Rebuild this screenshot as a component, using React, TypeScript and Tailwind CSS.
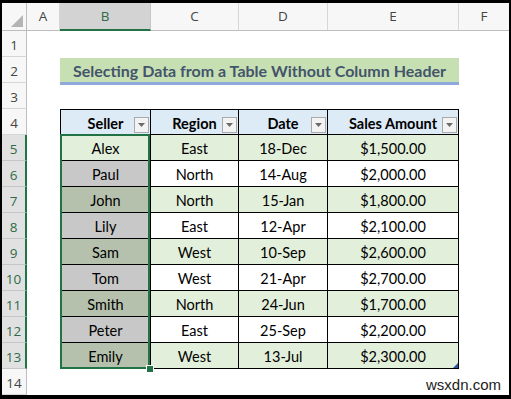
import React from "react";

// Excel-like sheet: table B4:E13 with the Seller data column selected.

type Row = { seller: string; region: string; date: string; amount: string };

const DATA: Row[] = [
  { seller: "Alex", region: "East", date: "18-Dec", amount: "$1,500.00" },
  { seller: "Paul", region: "North", date: "14-Aug", amount: "$2,000.00" },
  { seller: "John", region: "North", date: "15-Jan", amount: "$1,800.00" },
  { seller: "Lily", region: "East", date: "12-Apr", amount: "$2,100.00" },
  { seller: "Sam", region: "West", date: "10-Sep", amount: "$2,600.00" },
  { seller: "Tom", region: "West", date: "21-Apr", amount: "$2,700.00" },
  { seller: "Smith", region: "North", date: "24-Jun", amount: "$1,700.00" },
  { seller: "Peter", region: "East", date: "25-Sep", amount: "$2,200.00" },
  { seller: "Emily", region: "West", date: "13-Jul", amount: "$2,300.00" },
];

const cellFont = { fontFamily: "Lato, 'Open Sans', sans-serif" };
const headFont = { fontFamily: "'Open Sans', 'Noto Sans', sans-serif" };

function RowHead({ n, selected }: { n: number; selected?: boolean }) {
  return (
    <div
      style={headFont}
      className={
        "w-[25px] shrink-0 flex items-end justify-center pb-[1px] text-[13.5px] border-b " +
        (selected
          ? "bg-[#e1e1e1] text-[#2f6b48] border-b-[#c6c6c6] border-r-2 border-r-[#217346]"
          : "bg-[#f7f7f7] text-[#444] border-b-[#d6d6d6] border-r border-r-[#bdbdbd]")
      }
    >
      {n}
    </div>
  );
}

function Dropdown() {
  return (
    <div className="absolute right-[1px] bottom-[1px] w-[15px] h-[16px] bg-[#f3f3f3] border border-[#a9a9a9] flex items-center justify-center">
      <svg width="7" height="4" viewBox="0 0 7 4">
        <polygon points="0,0 7,0 3.5,4" fill="#6b6b6b" />
      </svg>
    </div>
  );
}

function HeadCell({ w, label, first }: { w: string; label: string; first?: boolean }) {
  return (
    <div
      style={cellFont}
      className={
        w +
        " relative shrink-0 flex items-center justify-center pt-[3px] bg-[#ddebf7] border-t border-b border-r border-black text-[14.5px] font-bold text-black " +
        (first ? "border-l" : "")
      }
    >
      {label}
      <Dropdown />
    </div>
  );
}

export default function App() {
  return (
    <div className="w-[511px] h-[399px] bg-black pt-[3px] pl-[2px] pr-[2px] pb-[4px]">
      <div className="relative w-[507px] h-[392px] bg-white overflow-hidden">
        {/* column headers */}
        <div style={headFont} className="flex h-[28px] text-[13.5px] text-[#444]">
          <div className="w-[25px] shrink-0 bg-[#f7f7f7] border-r border-b border-[#bdbdbd] flex items-end justify-end pr-[3px] pb-[3px]">
            <svg width="12" height="12" viewBox="0 0 12 12">
              <polygon points="12,0 12,12 0,12" fill="#b4b4b4" />
            </svg>
          </div>
          <div className="w-[33px] shrink-0 bg-[#f7f7f7] border-r border-r-[#d6d6d6] border-b border-b-[#bdbdbd] flex items-center justify-center">A</div>
          <div className="w-[91px] shrink-0 bg-[#d3d3d3] text-[#2f6b48] border-r border-r-[#c6c6c6] border-b-2 border-b-[#217346] flex items-center justify-center">B</div>
          <div className="w-[88px] shrink-0 bg-[#f7f7f7] border-r border-r-[#d6d6d6] border-b border-b-[#bdbdbd] flex items-center justify-center">C</div>
          <div className="w-[89px] shrink-0 bg-[#f7f7f7] border-r border-r-[#d6d6d6] border-b border-b-[#bdbdbd] flex items-center justify-center">D</div>
          <div className="w-[131px] shrink-0 bg-[#f7f7f7] border-r border-r-[#d6d6d6] border-b border-b-[#bdbdbd] flex items-center justify-center">E</div>
          <div className="flex-1 bg-[#f7f7f7] border-b border-b-[#bdbdbd] flex items-center justify-center">F</div>
        </div>

        {/* row 1 */}
        <div className="flex h-[26px]">
          <RowHead n={1} />
        </div>

        {/* row 2: title */}
        <div className="flex h-[26px]">
          <RowHead n={2} />
          <div className="w-[33px] shrink-0" />
          <div className="w-[399px] shrink-0 pt-[1px]">
            <div
              style={cellFont}
              className="h-[23px] bg-[#c6e0b4] border-b-[3px] border-[#8eaadb] box-content flex items-center justify-center pt-[1px] text-[16px] font-bold text-[#44546a]"
            >
              Selecting Data from a Table Without Column Header
            </div>
          </div>
        </div>

        {/* row 3 */}
        <div className="flex h-[26px]">
          <RowHead n={3} />
        </div>

        {/* row 4: table header */}
        <div className="flex h-[26px]">
          <RowHead n={4} />
          <div className="w-[33px] shrink-0" />
          <HeadCell w="w-[91px]" label="Seller" first />
          <HeadCell w="w-[88px]" label="Region" />
          <HeadCell w="w-[89px]" label="Date" />
          <HeadCell w="w-[131px]" label="Sales Amount" />
        </div>

        {/* data rows */}
        {DATA.map((r, i) => {
          const green = i % 2 === 0;
          const base = green ? "bg-[#e2efda]" : "bg-white";
          const sel = i === 0 ? "bg-[#e2efda]" : green ? "bg-[#b5c1ad]" : "bg-[#c8c8c8]";
          return (
            <div key={r.seller} style={cellFont} className="flex h-[26px] text-[14.5px] text-black">
              <RowHead n={i + 5} selected />
              <div className="w-[33px] shrink-0" />
              <div className={"w-[91px] shrink-0 flex items-center justify-center pt-[3px] border-l border-r border-b border-black " + sel}>{r.seller}</div>
              <div className={"w-[88px] shrink-0 flex items-center justify-center pt-[3px] border-r border-b border-black " + base}>{r.region}</div>
              <div className={"w-[89px] shrink-0 flex items-center justify-center pt-[3px] border-r border-b border-black " + base}>{r.date}</div>
              <div className={"relative w-[131px] shrink-0 flex items-center justify-center pt-[3px] border-r border-b border-black " + base}>
                {r.amount}
                {i === DATA.length - 1 && (
                  <svg className="absolute right-0 bottom-0" width="5" height="5" viewBox="0 0 5 5">
                    <polygon points="5,0 5,5 0,5" fill="#2f5597" />
                  </svg>
                )}
              </div>
            </div>
          );
        })}

        {/* row 14 */}
        <div className="flex h-[26px]">
          <RowHead n={14} />
        </div>

        {/* selection outline B5:B13 and fill handle */}
        <div className="absolute left-[58px] top-[131px] w-[90px] h-[235px] border-2 border-[#217346] pointer-events-none" />
        <div className="absolute left-[144px] top-[362px] w-[6px] h-[6px] bg-[#217346] border border-white box-content pointer-events-none" />

        {/* watermark */}
        <div
          style={{ fontFamily: "'Liberation Sans', Arial, sans-serif" }}
          className="absolute right-[8px] bottom-[-1px] text-[15px] text-[#222]"
        >
          wsxdn.com
        </div>
      </div>
    </div>
  );
}
